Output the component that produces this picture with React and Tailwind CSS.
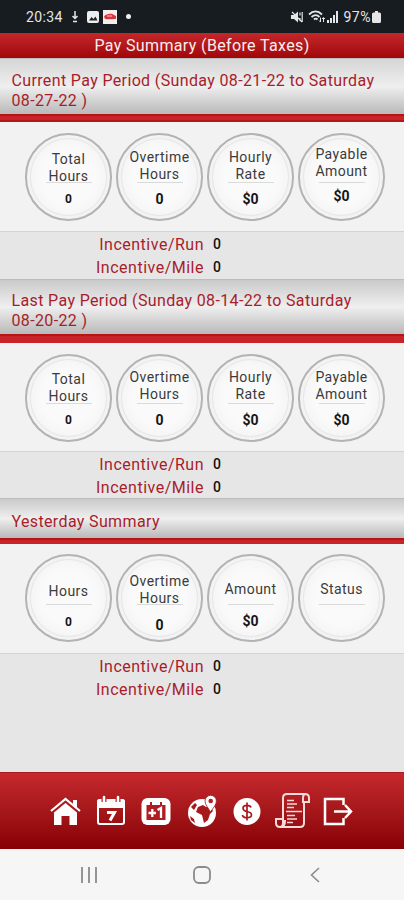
import clsx from "clsx";

const periods = [
  {
    title: ["Current Pay Period (Sunday 08-21-22 to Saturday", "08-27-22 )"],
    headerClass: "h-14 pt-3 from-[#d6d6d6]",
    barClass: "h-2 border-b-2 border-b-[#b5161a]",
    bodyClass: "h-[109px] pt-[11px]",
    footerClass: "h-12",
    circles: [
      { label: "Total Hours", value: "0", small: true, pad: "h-[44px] pt-[17px]" },
      { label: "Overtime Hours", value: "0", pad: "h-[44px] pt-[15px]" },
      { label: "Hourly Rate", value: "$0", pad: "h-[44px] pt-[15px]" },
      { label: "Payable Amount", value: "$0", pad: "h-[44px] pt-3", valuePad: "pt-[5px]" },
    ],
  },
  {
    title: ["Last Pay Period (Sunday 08-14-22 to Saturday", "08-20-22 )"],
    headerClass: "h-[55px] pt-[11px] from-[#cacaca]",
    barClass: "h-[9px]",
    bodyClass: "h-[108px] pt-[11px]",
    footerClass: "h-[47px]",
    circles: [
      { label: "Total Hours", value: "0", small: true, pad: "h-[44px] pt-4" },
      { label: "Overtime Hours", value: "0", pad: "h-[44px] pt-[14px]" },
      { label: "Hourly Rate", value: "$0", pad: "h-[44px] pt-[14px]" },
      { label: "Payable Amount", value: "$0", pad: "h-[44px] pt-[14px]" },
    ],
  },
  {
    title: ["Yesterday Summary"],
    headerClass: "h-10 pt-[13px] from-[#cacaca]",
    barClass: "h-[6px]",
    bodyClass: "h-[109px] pt-[10px]",
    footerClass: "h-[119px]",
    circles: [
      { label: "Hours", value: "0", small: true, pad: "h-[45px] pt-[28px]", valuePad: "pt-[9px]" },
      { label: "Overtime Hours", value: "0", pad: "h-[45px] pt-[18px]", valuePad: "pt-[12px]" },
      { label: "Amount", value: "$0", pad: "h-[45px] pt-[26px]" },
      { label: "Status", value: "", pad: "h-[45px] pt-[26px]" },
    ],
  },
];

function StatusBar() {
  return (
    <div className="h-[33px] bg-[#171c20] flex items-center pl-[26px] pr-[23px] text-[#e4e6e7]">
      <span className="text-[14px] leading-none tracking-[0.4px]">20:34</span>
      <svg className="ml-2 w-2 h-[13px]" viewBox="0 0 8 13" fill="none" stroke="currentColor" strokeWidth="1.5">
        <path d="M4 1v7M1.5 6 4 8.5 6.5 6M2 11.5h4" />
      </svg>
      <svg className="ml-[8px] w-3 h-3" viewBox="0 0 12 12">
        <rect width="12" height="12" rx="2" fill="#eeeeee" />
        <path d="M2 9.5 4.500 6l2 2L8.500 5.500l2 4z" fill="#20262a" />
      </svg>
      <svg className="ml-1 w-[14px] h-[14px]" viewBox="0 0 14 14">
        <rect width="14" height="14" fill="#f5eeee" />
        <path d="M1 6.500C3 3.500 9 3 11 5l2 1v3H2z" fill="#d6383f" />
        <path d="M4 6h5M3 9.500h8" stroke="#f5c5c5" />
      </svg>
      <span className="ml-[9px] w-[5px] h-[5px] rounded-full bg-[#eeeeee]" />
      <div className="ml-auto flex items-center">
        <svg className="w-3 h-3" viewBox="0 0 12 12" fill="currentColor">
          <path d="M0 4h3l4-3.500v11L3 8H0z" />
          <path d="M1 1l10 10M9 1.500v3M11.200 1v10M9 7v3" stroke="currentColor" strokeWidth="1.200" />
        </svg>
        <svg className="ml-[5px] w-[17px] h-[13px]" viewBox="0 0 17 13" fill="none" stroke="currentColor" strokeWidth="1.800">
          <path d="M1 4.500c4-4 9-4 13 0M3.500 7c3-2.500 5.500-2.500 8 0M6 9.500c1-1 2.500-1 3.500 0" />
          <path d="M12.500 12V7.500M15.500 8v4M11 10.500l1.500 1.500M14 9l1.500-1.500L17 9" strokeWidth="1" />
        </svg>
        <svg className="ml-[2px] w-3 h-3" viewBox="0 0 12 12" fill="currentColor">
          <path d="M0 9h2v3H0zM3 7h2v5H3zM6 4h2v8H6zM9 0h2v12H9z" />
        </svg>
        <span className="ml-[5px] text-[14px] leading-none tracking-[0.5px]">97%</span>
        <svg className="ml-px w-[9px] h-[12px]" viewBox="0 0 9 12" fill="currentColor">
          <path d="M3 0h3v1.500h1.500Q9 1.500 9 3v7.500Q9 12 7.500 12h-6Q0 12 0 10.500V3Q0 1.500 1.500 1.500H3z" />
        </svg>
      </div>
    </div>
  );
}

function Circle({ label, value, small, pad, valuePad = "pt-[8px]" }) {
  return (
    <div className="w-[87px] h-[88px] rounded-full border-2 border-[#b3b3b3] bg-[#f3f3f3] p-[3px]">
      <div className="w-full h-full rounded-full border border-[#e6e6e6] bg-radial from-[#fafafa] from-50% to-[#efefef] flex flex-col items-center">
        <div className={clsx("shrink-0 -mt-px -mx-2 text-center text-[14px] leading-[17px] tracking-[0.45px] text-[#3a3a3a]", pad)}>
          {label.split(" ").map((word) => (
            <div key={word} className="-mt-[4px] mb-[4px]">{word}</div>
          ))}
        </div>
        <div className="w-[46px] h-px shrink-0 bg-[#d9dbdb]" />
        <div className={clsx("font-bold leading-[16px] text-[#151515]", small ? "text-[12px]" : "text-[14px]", valuePad)}>
          {value}
        </div>
      </div>
    </div>
  );
}

function Incentive({ label }) {
  return (
    <div className="flex h-[23px] items-center text-[16px]">
      <span className="w-[204px] text-right tracking-[0.5px] text-[#a71d2b]">{label}</span>
      <span className="ml-[9px] text-[14px] font-medium text-[#111111]">0</span>
    </div>
  );
}

function Period({ title, headerClass, barClass, bodyClass, footerClass, circles }) {
  return (
    <section>
      <div
        className={clsx(
          "pl-[11.5px] text-[16px] leading-5 tracking-[0.36px] text-[#a71d2b] border-t border-[#bcbcbc] bg-linear-to-b via-[#efefef] via-50% to-[#b9b9b9]",
          headerClass,
        )}
      >
        {title.map((line) => (
          <div key={line}>{line}</div>
        ))}
      </div>
      <div className={clsx("bg-[#c82428] border-t-2 border-t-[#b81418]", barClass)} />
      <div className={clsx("flex gap-1 pl-[25px] bg-[#f2f2f2]", bodyClass)}>
        {circles.map((c) => (
          <Circle key={c.label} {...c} />
        ))}
      </div>
      <div className={clsx("pt-px bg-[#e6e6e6] border-t border-[#d4d4d4]", footerClass)}>
        <Incentive label="Incentive/Run" />
        <Incentive label="Incentive/Mile" />
      </div>
    </section>
  );
}

function NavIcons() {
  return (
    <div className="h-[77px] flex items-center pl-[50px] text-white bg-linear-to-b from-[#c5292d] to-[#870004] border-t border-[#a91c20]">
      <svg className="w-8 h-8" viewBox="0 0 32 32" fill="none" stroke="currentColor">
        <path d="M1 16 15.500 4 30 16" strokeWidth="2.200" />
        <path d="M4 17.500 15.500 8 27 17.500V30h-7.500v-9h-8v9H4z" fill="currentColor" stroke="none" />
        <path d="M23 5h4v8l-4-3.500z" fill="currentColor" stroke="none" />
      </svg>
      <svg className="ml-[14px] w-[30px] h-8" viewBox="0 0 30 32" fill="none" stroke="currentColor">
        <path d="M1 7q0-3 3-3h22q3 0 3 3v6H1z" fill="currentColor" stroke="none" />
        <rect x="2" y="5" width="26" height="24" rx="2" strokeWidth="2" />
        <path d="M8 1v6M22 1v6" stroke="#b52025" strokeWidth="5" />
        <path d="M8 2v5M22 2v5" strokeWidth="2.500" strokeLinecap="round" />
        <path d="M11 17.500h7.500l-4.500 8" strokeWidth="3" />
      </svg>
      <svg className="ml-[15px] w-[30px] h-8" viewBox="0 0 30 32">
        <rect x="0.500" y="3" width="29" height="27" rx="6" fill="currentColor" />
        <rect x="5.500" y="10" width="19" height="15" fill="#b01c21" />
        <path d="M10 7v4M20 7v4" stroke="#b01c21" strokeWidth="2" />
        <path d="M7.500 18h7.500M11.300 14v8M16.500 15l3.500-2v10" stroke="white" strokeWidth="2.300" fill="none" />
      </svg>
      <svg className="ml-[17px] w-8 h-8" viewBox="0 0 32 32">
        <circle cx="14" cy="18" r="14" fill="white" />
        <path d="M10 12l5-2 3 2 4-1 3 5-3 3-2 6-4 3-2-8-6-3zM3 12l4-4 2 2-3 5zM2 21l4 3 1 4-4-3z" fill="#a8191d" />
        <path d="M20 17C18 13 14.500 10 14.500 6a5.700 5.700 0 0 1 11.400 0c0 4-3.500 7-5.900 11z" transform="translate(2.500 0)" fill="white" stroke="#a8191d" strokeWidth=".8" />
        <circle cx="22.700" cy="6" r="2.300" fill="#b52025" />
      </svg>
      <svg className="ml-[13px] w-7 h-8" viewBox="0 0 28 32" fill="none">
        <circle cx="14" cy="16.500" r="13.500" fill="white" />
        <path d="M18 12.500Q17.300 10.300 14 10.300q-4 0-4 2.900 0 2.300 4 3.300 4.500 1 4.500 3.300 0 2.900-4.500 2.900-4 0-4.600-2.700M14 7.500v18" stroke="#a8191d" strokeWidth="1.700" />
      </svg>
      <svg className="ml-[14px] w-9 h-9" viewBox="0 0 36 36" fill="none" stroke="#f6dada" strokeWidth="2">
        <path d="M8 26V5q0-4 4-4h18q4 0 4 4v4h-6V5q0-4 3-4M29 9v21q0 4-4 4H5q-4 0-4-4v-4h7v4q0 4-3 4" />
        <path d="M8 28h2q0 5-4 6" />
        <path d="M12 7.500h7M12 11h10M12 14.500h7M11 18.500h16M12 22.500h8M12 26h10M12 29.500h6" strokeWidth="1.700" />
      </svg>
      <svg className="ml-[12px] w-[30px] h-8" viewBox="0 0 30 32" fill="none" stroke="currentColor" strokeWidth="2.500">
        <path d="M20.500 10V4H2v25h18.500v-6M11 16.500h16M22 10l6 6.500-6 6.500" />
      </svg>
    </div>
  );
}

export default function App() {
  return (
    <div className="w-[404px] h-[900px] overflow-hidden bg-[#e6e6e6] font-['Roboto','Liberation_Sans',sans-serif]">
      <StatusBar />
      <div className="h-[25px] bg-linear-to-b from-[#c5262a] to-[#a00508] text-center text-[16px] leading-[26px] tracking-[0.36px] text-[#f9eeee]">
        Pay Summary (Before Taxes)
      </div>
      {periods.map((p) => (
        <Period key={p.title[0]} {...p} />
      ))}
      <NavIcons />
      <div className="h-[51px] flex items-center bg-[#f6f6f6] text-[#8b8b8b]">
        <svg className="ml-[80px] w-[18px] h-4" viewBox="0 0 18 16" fill="none" stroke="currentColor" strokeWidth="1.800">
          <path d="M2 0v16M9 0v16M16 0v16" />
        </svg>
        <svg className="ml-[95px] w-[18px] h-[18px]" viewBox="0 0 18 18" fill="none" stroke="currentColor" strokeWidth="1.800">
          <rect x="1" y="1" width="16" height="16" rx="5" />
        </svg>
        <svg className="ml-[99px] w-[10px] h-4" viewBox="0 0 10 16" fill="none" stroke="currentColor" strokeWidth="1.600">
          <path d="M9 1 1.500 8 9 15" />
        </svg>
      </div>
    </div>
  );
}
